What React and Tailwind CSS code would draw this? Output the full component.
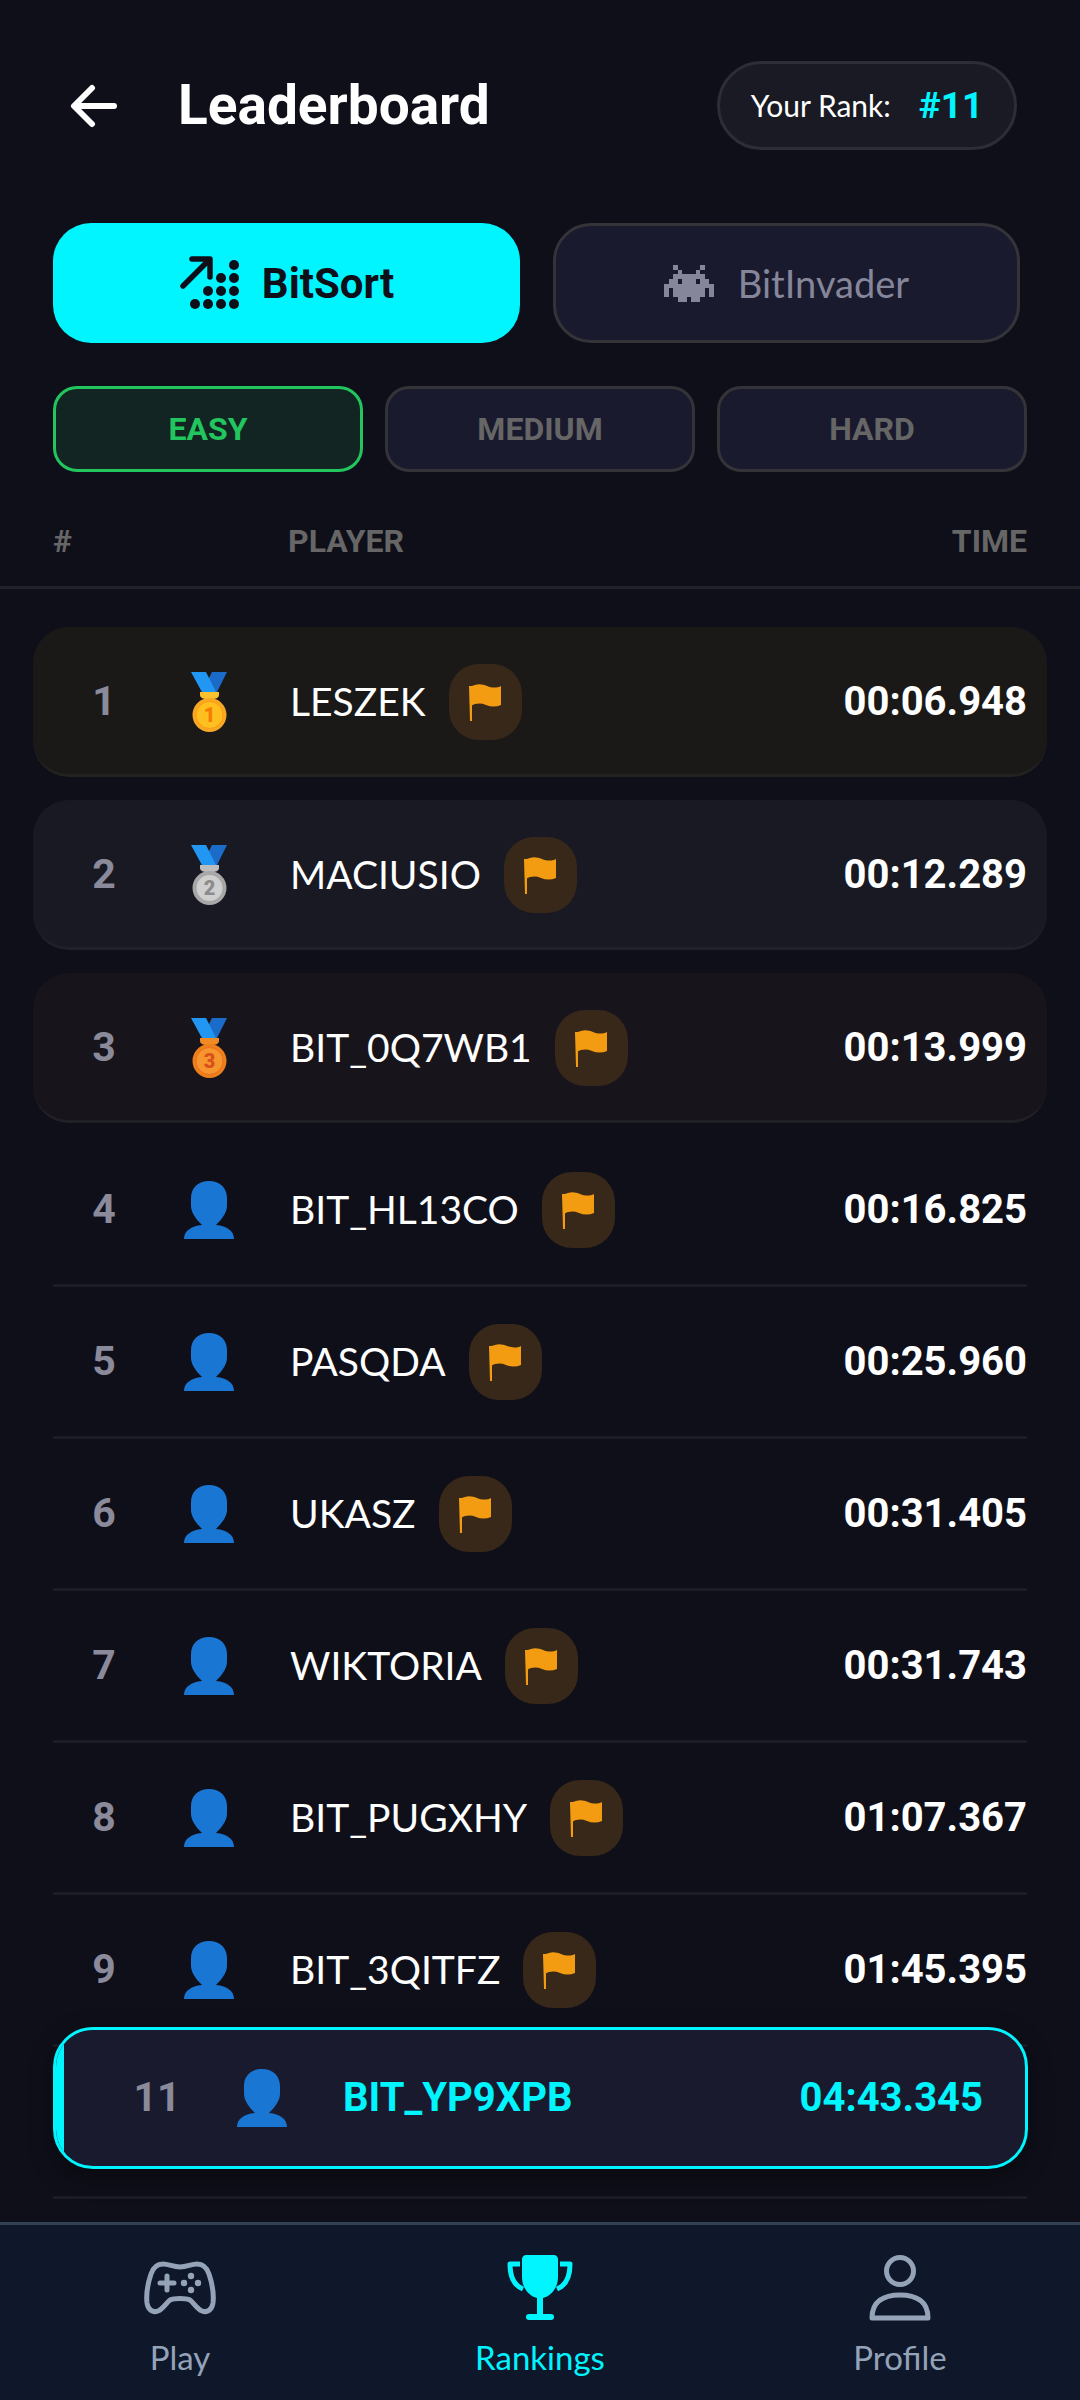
import React from 'react';

const rows = [
  { rank: 1, name: 'LESZEK', time: '00:06.948', medal: 'gold', bg: 'bg-[#1a1918] border-[#22221f]' },
  { rank: 2, name: 'MACIUSIO', time: '00:12.289', medal: 'silver', bg: 'bg-[#181922] border-[#20212a]' },
  { rank: 3, name: 'BIT_0Q7WB1', time: '00:13.999', medal: 'bronze', bg: 'bg-[#17151b] border-[#212026]' },
  { rank: 4, name: 'BIT_HL13CO', time: '00:16.825' },
  { rank: 5, name: 'PASQDA', time: '00:25.960' },
  { rank: 6, name: 'UKASZ', time: '00:31.405' },
  { rank: 7, name: 'WIKTORIA', time: '00:31.743' },
  { rank: 8, name: 'BIT_PUGXHY', time: '01:07.367' },
  { rank: 9, name: 'BIT_3QITFZ', time: '01:45.395' },
];

const medals = {
  gold: { digit: '1', outer: '#f9a825', inner: '#ffc01f', ink: '#f57c00', ring: '#fbc02d' },
  silver: { digit: '2', outer: '#a8a8a8', inner: '#cfcfcf', ink: '#8c8c8c', ring: '#bdbdbd' },
  bronze: { digit: '3', outer: '#ef7f1a', inner: '#f7952e', ink: '#d8501c', ring: '#f08a24' },
};

const invader = [
  '..X.....X..',
  '...X...X...',
  '..XXXXXXX..',
  '.XX.XXX.XX.',
  'XXXXXXXXXXX',
  'X.XXXXXXX.X',
  'X.XXXXXXX.X',
  '...XX.XX...',
];

const ArrowIcon = () => (
  <svg width="48" height="44" viewBox="0 0 48 44" fill="none" stroke="#fff" strokeWidth="6" strokeLinecap="round" strokeLinejoin="round">
    <path d="M44 22H5" />
    <path d="M22 4L4 22L22 40" />
  </svg>
);

const SortIcon = () => (
  <svg width="62" height="56" viewBox="0 0 62 56" fill="#0f0f1a">
    <path d="M4 31L30 5M13 4H31V22" fill="none" stroke="#0f0f1a" strokeWidth="5.5" strokeLinecap="round" strokeLinejoin="round" />
    <circle cx="55" cy="10" r="5" />
    <circle cx="42" cy="23" r="5" />
    <circle cx="55" cy="23" r="5" />
    <circle cx="29" cy="36" r="5" />
    <circle cx="42" cy="36" r="5" />
    <circle cx="55" cy="36" r="5" />
    <circle cx="16" cy="49" r="5" />
    <circle cx="29" cy="49" r="5" />
    <circle cx="42" cy="49" r="5" />
    <circle cx="55" cy="49" r="5" />
  </svg>
);

const InvaderIcon = () => (
  <svg width="50" height="37" viewBox="0 0 11 8" fill="#86869a" shapeRendering="crispEdges">
    {invader.map((line, y) =>
      line.split('').map((c, x) => (c === 'X' ? <rect key={`${x}-${y}`} x={x} y={y} width="1" height="1" /> : null))
    )}
  </svg>
);

const FlagBadge = () => (
  <div className="w-[73px] h-[76px] rounded-[30px] bg-[#38281a] flex items-center justify-center shrink-0">
    <svg width="33" height="38" viewBox="0 0 33 38" fill="#f39c12">
      <path d="M0 3H3V38H1Z" />
      <path d="M1 4C8 0 13 1 18 3C23 5 28 5 32 3V22C27 24 22 24 17 22C12 20 7 20 2 23Z" />
    </svg>
  </div>
);

const Medal = ({ type }) => {
  const m = medals[type];
  return (
    <svg width="37" height="60" viewBox="0 0 37 60">
      <path d="M36 0H21L14 14L19 22H25Z" fill="#1a6cc8" />
      <path d="M0 0H15L26 22H12Z" fill="#2196f3" />
      <path d="M9 20H28V23C28 26 24 27 22 27V29H15V27C13 27 9 26 9 23Z" fill={m.ring} />
      <circle cx="18.5" cy="43" r="17" fill={m.outer} />
      <circle cx="18.5" cy="43" r="13.5" fill={m.inner} stroke={m.ink} strokeOpacity="0.45" strokeWidth="1" />
      <text x="18.5" y="50" textAnchor="middle" fontSize="20" fontWeight="900" fontFamily="Roboto, sans-serif" fill={m.ink}>
        {m.digit}
      </text>
    </svg>
  );
};

const PersonIcon = () => (
  <svg width="50" height="58" viewBox="0 0 50 58" fill="#1976d2">
    <path d="M25 0C36 0 43 7 43 17V25C43 32 37 39 32 44C43 45 50 50 50 58H0C0 50 7 45 18 44C13 39 7 32 7 25V17C7 7 14 0 25 0Z" />
  </svg>
);

const GamepadIcon = () => (
  <svg width="72" height="54" viewBox="0 0 72 54" fill="none" stroke="#94a3b8" strokeWidth="5" strokeLinecap="round" strokeLinejoin="round">
    <path d="M19 3C25 3 29 6 36 6C43 6 47 3 53 3C59 3 63 7 65 13C68 22 70 33 69 42C68 49 63 52 58 50C53 48 50 42 46 39C42 37 30 37 26 39C22 42 19 48 14 50C9 52 4 49 3 42C2 33 4 22 7 13C9 7 13 3 19 3Z" />
    <path d="M23 15V29M16 22H30" />
    <g fill="#94a3b8" stroke="none">
      <circle cx="47" cy="15" r="3.2" />
      <circle cx="47" cy="29" r="3.2" />
      <circle cx="40" cy="22" r="3.2" />
      <circle cx="54" cy="22" r="3.2" />
    </g>
  </svg>
);

const TrophyIcon = () => (
  <svg width="66" height="66" viewBox="0 0 66 66" fill="#00f5ff">
    <path d="M15 4C15 2 17 0 19 0H47C49 0 51 2 51 4V22C51 33 44 41 36 43V60H30V43C22 41 15 33 15 22Z" />
    <path d="M13 9H3C3 20 6 30 16 34" fill="none" stroke="#00f5ff" strokeWidth="5" strokeLinejoin="round" />
    <path d="M53 9H63C63 20 60 30 50 34" fill="none" stroke="#00f5ff" strokeWidth="5" strokeLinejoin="round" />
    <rect x="19" y="59" width="28" height="6" rx="3" />
  </svg>
);

const ProfileIcon = () => (
  <svg width="62" height="66" viewBox="0 0 62 66" fill="none" stroke="#94a3b8" strokeWidth="5">
    <circle cx="31" cy="16" r="13.5" />
    <path d="M3 63C3 46 15 40 31 40C47 40 59 46 59 63Z" strokeLinejoin="round" />
  </svg>
);

const RowCells = ({ rank, icon }) => (
  <>
    <div className="w-[102px] shrink-0 text-center text-[#8a8a9a] font-['Roboto',sans-serif] font-bold text-[41px]">{rank}</div>
    <div className="w-[108px] shrink-0 flex justify-center">{icon}</div>
  </>
);

const LeaderRow = ({ row }) => {
  const body = (
    <>
      <RowCells rank={row.rank} icon={row.medal ? <Medal type={row.medal} /> : <PersonIcon />} />
      <div className="ml-[27px] flex items-center gap-[23px] flex-1">
        <span className="text-white text-[39px] font-['Lato',sans-serif]">{row.name}</span>
        <FlagBadge />
      </div>
      <span className="text-white font-['Roboto',sans-serif] font-bold text-[40px]">{row.time}</span>
    </>
  );

  if (row.medal) {
    return (
      <div className={`h-[150px] px-[20px] pt-[2px] flex items-center rounded-[36px] border-b-[3px] ${row.bg}`}>
        {body}
      </div>
    );
  }
  return <div className="h-[152px] flex items-center border-b-[3px] border-[#1c1c26]">{body}</div>;
};

const NavItem = ({ icon, label, active }) => (
  <div className="flex-1 flex flex-col items-center">
    <div className="h-[66px] flex items-center justify-center">{icon}</div>
    <span className={`mt-[12px] text-[33px] font-['Lato',sans-serif] ${active ? 'text-[#00f5ff]' : 'text-[#94a3b8]'}`}>{label}</span>
  </div>
);

const App = () => {
  return (
    <div className="relative w-[1080px] h-[2400px] overflow-hidden flex flex-col bg-[#0f0f1a]">
      <div className="flex-1 min-h-0 overflow-hidden">
        <div className="h-[89px] mt-[61px] pl-[70px] pr-[63px] flex items-center">
          <ArrowIcon />
          <h1 className="ml-[60px] flex-1 text-white font-['Roboto',sans-serif] font-bold text-[55px]">Leaderboard</h1>
          <div className="h-[89px] w-[300px] rounded-full bg-[#1a1a24] border-[3px] border-[#2d2d35] flex items-center justify-center gap-[28px]">
            <span className="text-white text-[30px] font-['Lato',sans-serif]">Your Rank:</span>
            <span className="text-[#00f5ff] font-['Roboto',sans-serif] font-bold text-[37px]">#11</span>
          </div>
        </div>

        <div className="mt-[73px] pl-[53px] flex gap-[33px]">
          <div className="w-[467px] h-[120px] rounded-[38px] bg-[#00f5ff] flex items-center justify-center gap-[21px]">
            <SortIcon />
            <span className="text-[#0f0f1a] font-['Roboto',sans-serif] font-bold text-[42px]">BitSort</span>
          </div>
          <div className="w-[467px] h-[120px] rounded-[38px] bg-[#1a1a2e] border-[3px] border-[#333338] flex items-center justify-center gap-[24px]">
            <InvaderIcon />
            <span className="text-[#86869a] text-[38px] font-['Lato',sans-serif]">BitInvader</span>
          </div>
        </div>

        <div className="mt-[43px] px-[53px] grid grid-cols-3 gap-[22px]">
          <div className="h-[86px] rounded-[24px] bg-[#132522] border-[3px] border-[#22c55e] flex items-center justify-center text-[#22c55e] font-['Roboto',sans-serif] font-bold text-[32px]">EASY</div>
          <div className="h-[86px] rounded-[24px] bg-[#1a1a2e] border-[3px] border-[#333338] flex items-center justify-center text-[#666666] font-['Roboto',sans-serif] font-bold text-[32px]">MEDIUM</div>
          <div className="h-[86px] rounded-[24px] bg-[#1a1a2e] border-[3px] border-[#333338] flex items-center justify-center text-[#666666] font-['Roboto',sans-serif] font-bold text-[32px]">HARD</div>
        </div>

        <div className="mt-[36px] h-[81px] px-[53px] pb-[12px] flex items-center border-b-[3px] border-[#22222a] text-[#666666] font-['Roboto',sans-serif] font-bold text-[32px]">
          <span className="w-[235px]">#</span>
          <span className="flex-1">PLAYER</span>
          <span>TIME</span>
        </div>

        <div className="mt-[38px] mx-[33px] flex flex-col gap-[23px]">
          {rows.slice(0, 3).map((row) => (
            <LeaderRow key={row.rank} row={row} />
          ))}
        </div>
        <div className="mt-[12px] mx-[53px]">
          {rows.slice(3).map((row) => (
            <LeaderRow key={row.rank} row={row} />
          ))}
          <div className="h-[152px] border-b-[3px] border-[#1c1c26]" />
        </div>
      </div>

      <div className="absolute left-[53px] bottom-[231px] w-[975px] h-[142px] rounded-[40px] overflow-hidden bg-[#1a1a2e] border-[3px] border-[#00f5ff] pl-[50px] pr-[42px] flex items-center shadow-[0_8px_24px_rgba(0,0,0,0.4)]">
        <div className="absolute left-0 top-0 bottom-0 w-[8px] bg-[#00f5ff]" />
        <RowCells rank="11" icon={<PersonIcon />} />
        <span className="ml-[27px] flex-1 text-[#00f5ff] font-['Roboto',sans-serif] font-bold text-[40px]">BIT_YP9XPB</span>
        <span className="text-[#00f5ff] font-['Roboto',sans-serif] font-bold text-[40px]">04:43.345</span>
      </div>

      <nav className="h-[178px] shrink-0 bg-[#0f172a] border-t-[3px] border-[#334155] pt-[30px] flex">
        <NavItem icon={<GamepadIcon />} label="Play" />
        <NavItem icon={<TrophyIcon />} label="Rankings" active />
        <NavItem icon={<ProfileIcon />} label="Profile" />
      </nav>
    </div>
  );
};

export default App;
